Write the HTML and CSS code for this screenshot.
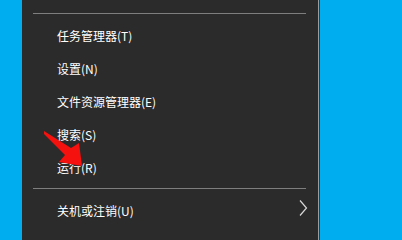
FILE: index.html
```html
<!DOCTYPE html>
<html lang="zh-CN">
<head>
<meta charset="utf-8">
<link rel="stylesheet" href="styles.css">
</head>
<body>
<div class="desktop">
  <div class="strip"></div>
  <div class="menu">
    <div class="sep"></div>
    <ul class="group">
      <li class="item">任务管理器(T)</li>
      <li class="item">设置(N)</li>
      <li class="item">文件资源管理器(E)</li>
      <li class="item">搜索(S)</li>
      <li class="item">运行(R)</li>
    </ul>
    <div class="sep"></div>
    <ul class="group last">
      <li class="item sub">关机或注销(U)
        <svg class="chev" width="9" height="16" viewBox="0 0 9 16"><path d="M1 0.5 L7.5 8 L1 15.5" fill="none" stroke="#d8d8d8" stroke-width="1.2"/></svg>
      </li>
    </ul>
    <svg class="arrow" width="60" height="50" viewBox="0 0 60 50"><polygon points="0,1 27,18 35,13 38,36 15,32 21,25 0,4" fill="#f5110d"/></svg>
  </div>
  <div class="edge"></div>
  <div class="rest"></div>
</div>
</body>
</html>
```
FILE: styles.css
```css
html, body {
  margin: 0;
  padding: 0;
  height: 100%;
  background: #00aeef;
  overflow: hidden;
}
.desktop {
  display: flex;
  height: 100%;
  min-height: 232px;
}
.strip {
  width: 22px;
  flex: none;
  background: #00aeef;
}
.menu {
  position: relative;
  width: 296px;
  flex: none;
  background: #2b2b2b;
  padding-top: 13px;
  box-sizing: border-box;
  font-family: "Noto Sans CJK SC", "Noto Sans", sans-serif;
  font-size: 12px;
  color: #ffffff;
}
.edge {
  width: 2px;
  flex: none;
  background: linear-gradient(to right, #9c9c9c 0 1px, #3a3a3a 1px 2px);
}
.rest {
  flex: 1;
  background: #00aeef;
}
.sep {
  height: 1px;
  margin: 0 12px 0 11px;
  background: #7e7e7e;
}
.group {
  list-style: none;
  margin: 5px 0 4px;
  padding: 0;
}
.group.last {
  margin-top: 5px;
}
.item {
  height: 33px;
  display: flex;
  align-items: center;
  padding-left: 35px;
  line-height: 1;
}
.sub {
  justify-content: space-between;
  padding-right: 10px;
}
.chev {
  margin-top: -5px;
}
.arrow {
  position: absolute;
  left: 22px;
  top: 130px;
}
```
